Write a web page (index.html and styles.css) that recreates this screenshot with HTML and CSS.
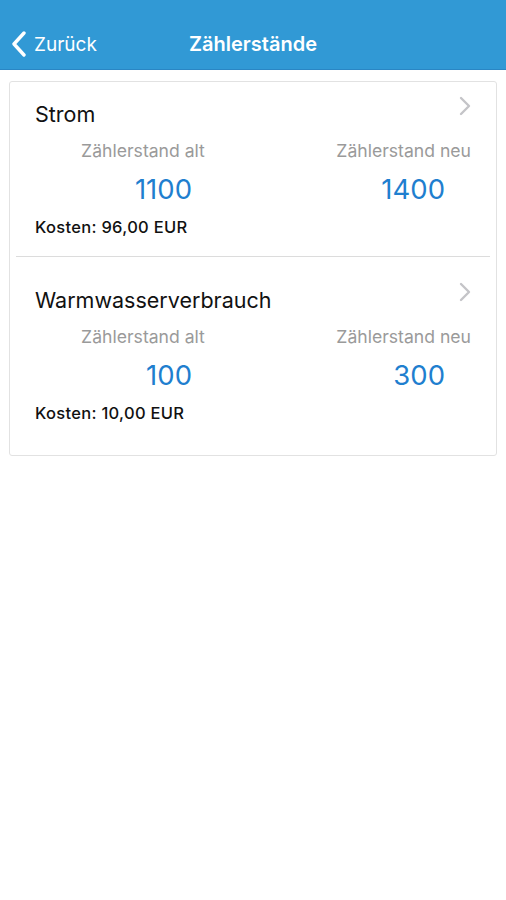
FILE: index.html
```html
<!DOCTYPE html>
<html lang="de">
<head>
    <meta charset="UTF-8">
    <meta name="viewport" content="width=device-width, initial-scale=1.0">
    <title>Zählerstände</title>
    <link rel="stylesheet" href="styles.css">
</head>
<body>
    <header class="navbar">
        <a class="back" href="#">
            <svg class="back-icon" width="16" height="26" viewBox="0 0 16 26">
                <path d="M13 2 L3 13 L13 24" fill="none" stroke="#fff" stroke-width="3.4" stroke-linecap="round" stroke-linejoin="round"/>
            </svg>
            <span>Zurück</span>
        </a>
        <h1 class="title">Zählerstände</h1>
    </header>
    <main>
        <div class="card">
            <div class="meter first">
                <div class="meter-head">
                    <h2>Strom</h2>
                    <svg class="chevron" width="14" height="20" viewBox="0 0 14 20">
                        <path d="M3 2 L11 10 L3 18" fill="none" stroke="#c4c4c8" stroke-width="2.4" stroke-linecap="round" stroke-linejoin="round"/>
                    </svg>
                </div>
                <div class="readings">
                    <div class="col col-old">
                        <span class="label">Zählerstand alt</span>
                        <span class="value">1100</span>
                    </div>
                    <div class="col col-new">
                        <span class="label">Zählerstand neu</span>
                        <span class="value">1400</span>
                    </div>
                </div>
                <p class="cost">Kosten: 96,00 EUR</p>
            </div>
            <div class="meter last">
                <div class="meter-head">
                    <h2>Warmwasserverbrauch</h2>
                    <svg class="chevron" width="14" height="20" viewBox="0 0 14 20">
                        <path d="M3 2 L11 10 L3 18" fill="none" stroke="#c4c4c8" stroke-width="2.4" stroke-linecap="round" stroke-linejoin="round"/>
                    </svg>
                </div>
                <div class="readings">
                    <div class="col col-old">
                        <span class="label">Zählerstand alt</span>
                        <span class="value">100</span>
                    </div>
                    <div class="col col-new">
                        <span class="label">Zählerstand neu</span>
                        <span class="value">300</span>
                    </div>
                </div>
                <p class="cost">Kosten: 10,00 EUR</p>
            </div>
        </div>
    </main>
</body>
</html>
```

FILE: styles.css
```css
body {
    font-family: Inter, "Liberation Sans", Arial, sans-serif;
    margin: 0;
    padding: 0;
    background: #fff;
    color: #111;
}
.navbar {
    background: #3199d5;
    height: 70px;
    display: flex;
    align-items: center;
    justify-content: center;
    padding-top: 18px;
    box-sizing: border-box;
    position: relative;
    border-bottom: 1px solid #2a86c4;
}
.back {
    position: absolute;
    left: 11px;
    top: 31px;
    display: flex;
    align-items: center;
    gap: 7px;
    color: #fff;
    text-decoration: none;
    font-size: 19px;
}
.title {
    margin: 0;
    color: #fff;
    font-size: 20px;
    font-weight: 600;
}
main {
    padding: 11px 9px;
}
.card {
    border: 1px solid #e2e2e2;
    border-radius: 3px;
    padding: 0 6px;
}
.meter {
    padding: 18px 19px 0;
}
.meter.first {
    padding-bottom: 20px;
    border-bottom: 1px solid #dcdcdc;
}
.meter.last {
    padding-top: 29px;
    padding-bottom: 33px;
}
.meter-head {
    display: flex;
    justify-content: space-between;
    align-items: flex-start;
}
.meter-head h2 {
    margin: 0;
    font-size: 21.5px;
    font-weight: 400;
    line-height: 28px;
}
.chevron {
    margin-top: -4px;
    margin-right: -1px;
}
.readings {
    display: grid;
    grid-template-columns: 216px 1fr;
    margin-top: 12px;
}
.col {
    display: flex;
    flex-direction: column;
}
.label {
    color: #9a9a9a;
    font-size: 17.6px;
    line-height: 22px;
}
.value {
    color: #1f7fcf;
    font-size: 27.5px;
    font-weight: 400;
    line-height: 30px;
    margin-top: 12px;
    text-align: right;
}
.col-old .label {
    text-align: center;
}
.col-old .value {
    padding-right: 59px;
}
.col-new .label {
    text-align: right;
}
.col-new .value {
    padding-right: 26px;
}
.cost {
    margin: 14px 0 0;
    font-size: 16.5px;
    font-weight: 500;
    letter-spacing: 0.3px;
    line-height: 18px;
}
```
